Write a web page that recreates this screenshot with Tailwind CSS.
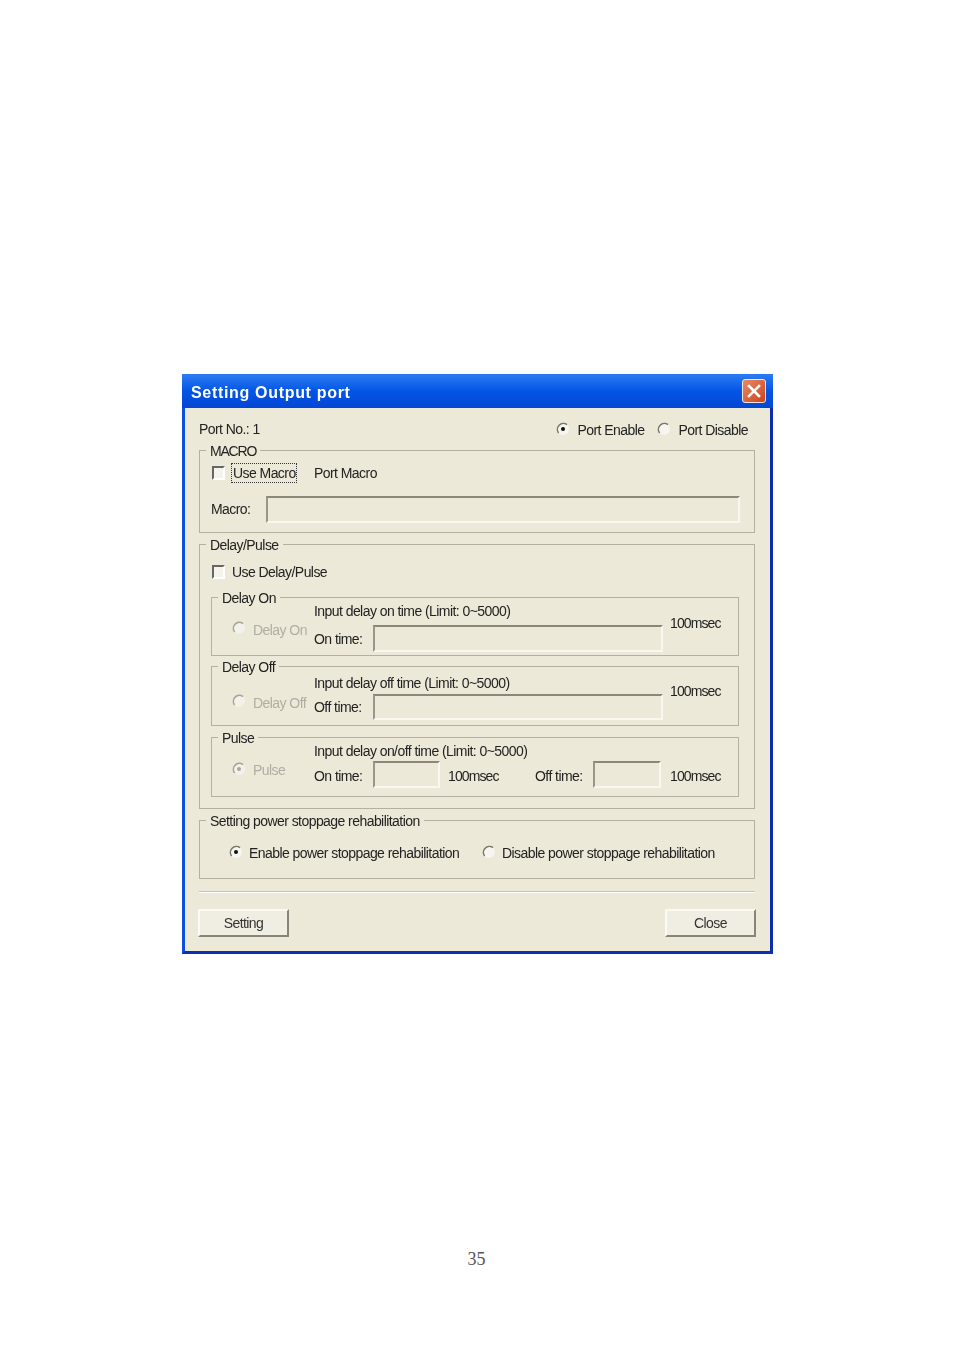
<!DOCTYPE html>
<html lang="en">
<head>
<meta charset="UTF-8">
<title>Setting Output port</title>
<script src="https://cdn.jsdelivr.net/npm/@tailwindcss/browser@4"></script>
</head>
<body class="bg-white font-['Liberation_Sans',sans-serif] text-[14px] leading-[14px] tracking-[-0.56px] text-[#222]">
<div class="h-[1351px] w-[954px] pt-[374px] pl-[182px]">

  <!-- dialog window -->
  <div class="w-[591px] h-[580px] flex flex-col bg-[#ece9d8] border-l-[3px] border-r-[3px] border-b-[3px] border-l-[#0a50dc] border-r-[#0a2db0] border-b-[#0a30b4] blur-[0.45px]">

    <!-- title bar -->
    <div class="h-[34px] -mx-[3px] flex items-center justify-between pl-[9px] pr-[7px] bg-linear-to-b from-[#2b7cf2] via-[#0455e6] to-[#0446d4]">
      <span class="mt-[3px] text-white font-bold text-[16px] tracking-[0.68px]">Setting Output port</span>
      <div class="w-[24px] h-[24px] rounded-[3px] border border-[#f5e6e0] bg-linear-to-br from-[#e88a66] to-[#cc3f14] flex items-center justify-center">
        <svg width="16" height="16" viewBox="0 0 16 16"><path d="M3 3L13 13M13 3L3 13" stroke="#fff" stroke-width="2.6" stroke-linecap="square"/></svg>
      </div>
    </div>

    <div class="pl-[14px] pr-[15px]">
      <!-- port row -->
      <div class="h-[35px] pt-[14px] flex justify-between">
        <span>Port No.: 1</span>
        <div class="flex pr-[7px]">
          <svg class="mr-[7px]" width="14" height="14" viewBox="0 0 14 14"><circle cx="7" cy="7" r="6" fill="#f6f5ef"/><path d="M2.6 11A6 6 0 0 1 11 2.6" fill="none" stroke="#77756a" stroke-width="1.5"/><circle cx="7" cy="7" r="2" fill="#111"/></svg>
          <span class="mt-[1px]">Port Enable</span>
          <svg class="ml-[13px] mr-[7px]" width="14" height="14" viewBox="0 0 14 14"><circle cx="7" cy="7" r="6" fill="#f6f5ef"/><path d="M2.6 11A6 6 0 0 1 11 2.6" fill="none" stroke="#77756a" stroke-width="1.5"/></svg>
          <span class="mt-[1px]">Port Disable</span>
        </div>
      </div>

      <!-- MACRO -->
      <fieldset class="border border-[#b4b1a3] h-[90px] pl-[11px]">
        <legend class="-ml-[5px] px-[4px] tracking-[-1.2px] translate-y-[1px]">MACRO</legend>
        <div class="flex items-center mt-[6px] h-[20px]">
          <div class="w-[13px] h-[14px] ml-[1px] bg-[#f4f3ec] border-2 border-t-[#666] border-l-[#666] border-r-white border-b-white"></div>
          <span class="ml-[6px] h-[20px] w-[66px] flex items-center pl-[1px] border border-dotted border-[#333] whitespace-nowrap">Use Macro</span>
          <span class="ml-[17px]">Port Macro</span>
        </div>
        <div class="flex items-center mt-[13px]">
          <span class="w-[55px] -mt-[2px]">Macro:</span>
          <div class="w-[474px] h-[27px] border-2 border-t-[#8b887b] border-l-[#9a978a] border-r-[#f8f7f0] border-b-[#f8f7f0]"></div>
        </div>
      </fieldset>

      <!-- Delay/Pulse -->
      <fieldset class="border border-[#b4b1a3] h-[272px] mt-[4px] pl-[11px]">
        <legend class="-ml-[5px] px-[4px] translate-y-[1px]">Delay/Pulse</legend>
        <div class="flex items-center mt-[14px] h-[14px]">
          <div class="w-[13px] h-[14px] ml-[1px] bg-[#f4f3ec] border-2 border-t-[#666] border-l-[#666] border-r-white border-b-white"></div>
          <span class="ml-[7px]">Use Delay/Pulse</span>
        </div>

        <!-- Delay On -->
        <fieldset class="border border-[#b4b1a3] w-[528px] h-[66px] mt-[11px]">
          <legend class="ml-[6px] px-[4px] translate-y-[1px]">Delay On</legend>
          <div class="flex">
            <div class="w-[102px] flex pl-[20px] pt-[17px] text-[#b0aea3]">
              <svg class="mr-[7px]" width="14" height="14" viewBox="0 0 14 14"><circle cx="7" cy="7" r="6" fill="#f3f2ea"/><path d="M2.6 11A6 6 0 0 1 11 2.6" fill="none" stroke="#a8a69a" stroke-width="1.6"/></svg>
              <span class="mt-[2px] whitespace-nowrap">Delay On</span>
            </div>
            <div class="w-[356px]">
              <div>Input delay on time (Limit: 0~5000)</div>
              <div class="flex items-center mt-[7px]">
                <span class="w-[59px]">On time:</span>
                <div class="w-[290px] h-[27px] border-2 border-t-[#8b887b] border-l-[#9a978a] border-r-[#f8f7f0] border-b-[#f8f7f0]"></div>
              </div>
            </div>
            <span class="mt-[12px] tracking-[-0.9px]">100msec</span>
          </div>
        </fieldset>

        <!-- Delay Off -->
        <fieldset class="border border-[#b4b1a3] w-[528px] h-[67px] mt-[3px]">
          <legend class="ml-[6px] px-[4px] translate-y-[1px]">Delay Off</legend>
          <div class="flex">
            <div class="w-[102px] flex pl-[20px] pt-[21px] text-[#b0aea3]">
              <svg class="mr-[7px]" width="14" height="14" viewBox="0 0 14 14"><circle cx="7" cy="7" r="6" fill="#f3f2ea"/><path d="M2.6 11A6 6 0 0 1 11 2.6" fill="none" stroke="#a8a69a" stroke-width="1.6"/></svg>
              <span class="mt-[2px] whitespace-nowrap">Delay Off</span>
            </div>
            <div class="w-[356px]">
              <div class="mt-[3px]">Input delay off time (Limit: 0~5000)</div>
              <div class="flex items-center mt-[4px]">
                <span class="w-[59px]">Off time:</span>
                <div class="w-[290px] h-[26px] border-2 border-t-[#8b887b] border-l-[#9a978a] border-r-[#f8f7f0] border-b-[#f8f7f0]"></div>
              </div>
            </div>
            <span class="mt-[11px] tracking-[-0.9px]">100msec</span>
          </div>
        </fieldset>

        <!-- Pulse -->
        <fieldset class="border border-[#b4b1a3] w-[528px] h-[67px] mt-[4px]">
          <legend class="ml-[6px] px-[4px] translate-y-[1px]">Pulse</legend>
          <div class="flex">
            <div class="w-[102px] flex pl-[20px] pt-[18px] text-[#b0aea3]">
              <svg class="mr-[7px]" width="14" height="14" viewBox="0 0 14 14"><circle cx="7" cy="7" r="6" fill="#f3f2ea"/><path d="M2.6 11A6 6 0 0 1 11 2.6" fill="none" stroke="#a8a69a" stroke-width="1.6"/><circle cx="7" cy="7" r="2" fill="#a8a69a"/></svg>
              <span class="mt-[1px]">Pulse</span>
            </div>
            <div>
              <div>Input delay on/off time (Limit: 0~5000)</div>
              <div class="flex items-center mt-[3px]">
                <span class="w-[59px] mt-[2px]">On time:</span>
                <div class="w-[67px] h-[27px] border-2 border-t-[#8b887b] border-l-[#9a978a] border-r-[#f8f7f0] border-b-[#f8f7f0]"></div>
                <span class="ml-[8px] w-[87px] mt-[2px] tracking-[-0.9px]">100msec</span>
                <span class="w-[58px] mt-[2px]">Off time:</span>
                <div class="w-[68px] h-[27px] border-2 border-t-[#8b887b] border-l-[#9a978a] border-r-[#f8f7f0] border-b-[#f8f7f0]"></div>
                <span class="ml-[9px] mt-[2px] tracking-[-0.9px]">100msec</span>
              </div>
            </div>
          </div>
        </fieldset>
      </fieldset>

      <!-- power stoppage -->
      <fieldset class="border border-[#b4b1a3] h-[66px] mt-[4px] pl-[29px]">
        <legend class="-ml-[23px] px-[4px] translate-y-[1px]">Setting power stoppage rehabilitation</legend>
        <div class="flex mt-[19px]">
          <svg class="mr-[6px] -mt-[1px]" width="14" height="14" viewBox="0 0 14 14"><circle cx="7" cy="7" r="6" fill="#f6f5ef"/><path d="M2.6 11A6 6 0 0 1 11 2.6" fill="none" stroke="#77756a" stroke-width="1.5"/><circle cx="7" cy="7" r="2" fill="#111"/></svg>
          <span class="w-[233px]">Enable power stoppage rehabilitation</span>
          <svg class="mr-[6px] -mt-[1px]" width="14" height="14" viewBox="0 0 14 14"><circle cx="7" cy="7" r="6" fill="#f6f5ef"/><path d="M2.6 11A6 6 0 0 1 11 2.6" fill="none" stroke="#77756a" stroke-width="1.5"/></svg>
          <span>Disable power stoppage rehabilitation</span>
        </div>
      </fieldset>

      <!-- separator -->
      <div class="mt-[12px] h-[2px] border-t border-t-[#c4c1b3] border-b border-b-white"></div>

      <!-- buttons -->
      <div class="flex justify-between mt-[16px] -ml-[1px] -mr-[1px]">
        <button class="w-[91px] h-[28px] bg-[#f0eee2] border-2 border-t-[#fbfaf5] border-l-[#fbfaf5] border-r-[#87847a] border-b-[#87847a] text-[#333]">Setting</button>
        <button class="w-[91px] h-[28px] bg-[#f0eee2] border-2 border-t-[#fbfaf5] border-l-[#fbfaf5] border-r-[#87847a] border-b-[#87847a] text-[#333]">Close</button>
      </div>
    </div>
  </div>

  <!-- page number -->
  <p class="w-[589px] mt-[296px] text-center font-['Liberation_Serif',serif] text-[18px] leading-[18px] tracking-normal text-[#555]">35</p>
</div>
</body>
</html>
